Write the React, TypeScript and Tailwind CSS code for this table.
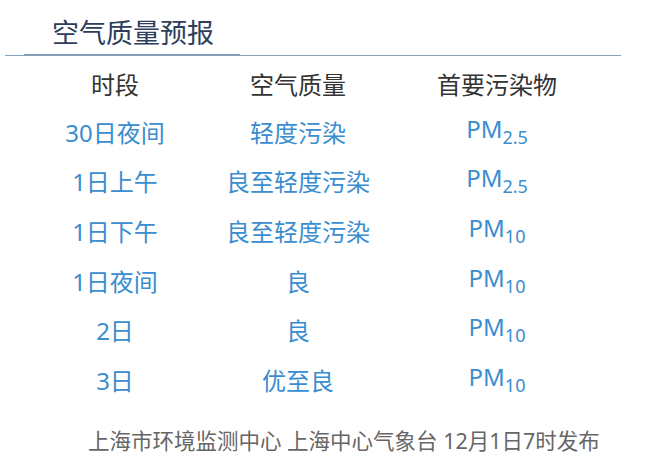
const rows = [
  { period: "30日夜间", quality: "轻度污染", sub: "2.5" },
  { period: "1日上午", quality: "良至轻度污染", sub: "2.5" },
  { period: "1日下午", quality: "良至轻度污染", sub: "10" },
  { period: "1日夜间", quality: "良", sub: "10" },
  { period: "2日", quality: "良", sub: "10" },
  { period: "3日", quality: "优至良", sub: "10" },
];

const font = { fontFamily: '"Noto Sans", "Noto Sans CJK SC", sans-serif' };

export default function App() {
  return (
    <div className="h-[474px] w-[645px] overflow-hidden bg-white" style={font}>
      <div className="pl-[52px] pt-[16px] text-[27px] leading-[34px] text-[#2d3e5c]">
        空气质量预报
      </div>
      <div className="ml-[5px] mt-[4px] w-[616px] border-b border-[#87a2bc]">
        <div className="ml-[19px] h-px w-[216px] bg-[#7f9ab4]" />
      </div>

      <div className="ml-[15px] mt-[6px] grid grid-cols-[200px_166px_232px] text-[24px] leading-[30px]">
        <div className="flex h-[46px] items-center justify-center text-[#333333]">时段</div>
        <div className="flex h-[46px] items-center justify-center text-[#333333]">空气质量</div>
        <div className="flex h-[46px] items-center justify-center text-[#333333]">首要污染物</div>
        {rows.map((r) => (
          <div key={r.period} className="contents text-[#3a8dcf]">
            <div className="flex h-[49.6px] items-center justify-center">{r.period}</div>
            <div className="flex h-[49.6px] items-center justify-center">{r.quality}</div>
            <div className="flex h-[49.6px] items-center justify-center">
              <span>
                PM<span className="align-[-6px] text-[18px]">{r.sub}</span>
              </span>
            </div>
          </div>
        ))}
      </div>

      <div className="mt-[16px] flex h-[40px] items-center pl-[88px] text-[21.5px] text-[#666666]">
        上海市环境监测中心 上海中心气象台 12月1日7时发布
      </div>
    </div>
  );
}
